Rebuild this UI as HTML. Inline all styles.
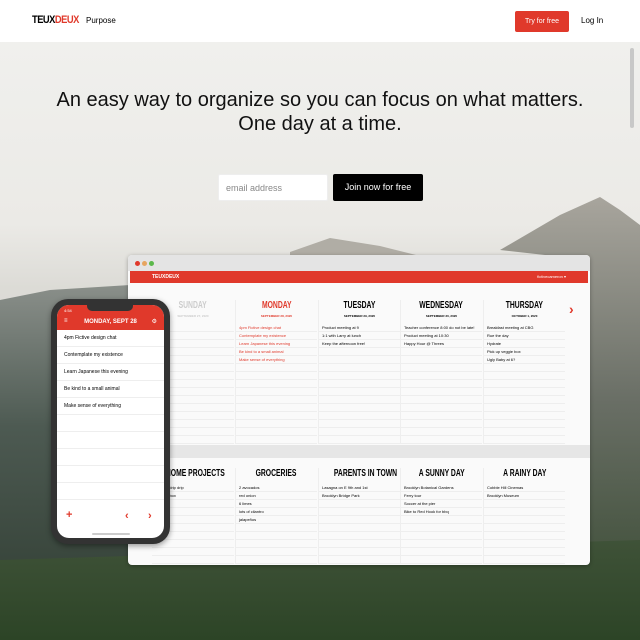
<!DOCTYPE html>
<html><head><meta charset="utf-8"><style>
*{margin:0;padding:0;box-sizing:border-box}
body{width:640px;height:640px;overflow:hidden;font-family:"Liberation Sans",sans-serif;position:relative;background:#eeefed}
.nav{position:absolute;left:0;top:0;width:640px;height:42px;background:#fff;z-index:5}
.abs{position:absolute}
.col{position:absolute;top:300px;width:82px}
.col h4{text-align:center;font-size:10px;font-weight:bold;white-space:nowrap;height:12px}
.col h4 span{display:inline-block;transform:scaleX(.68);transform-origin:center}
.col .d{text-align:center;font-size:3px;font-weight:bold;margin-top:2px;height:10px;white-space:nowrap}
.rows div{height:8px;border-bottom:1px solid #eee;font-size:4px;line-height:7px;padding-left:3px;white-space:nowrap;overflow:hidden}
.ph div{height:17px;border-bottom:1px solid #eee;font-size:5px;line-height:17px;padding-left:7px}
</style></head><body>
<svg class="abs" style="left:0;top:0" width="640" height="640">
<defs>
<linearGradient id="sky" x1="0" y1="0" x2="0" y2="1"><stop offset="0" stop-color="#f1f1ef"/><stop offset=".35" stop-color="#ebeae6"/><stop offset=".45" stop-color="#dcdbd6"/><stop offset="1" stop-color="#c9c8c3"/></linearGradient>
<linearGradient id="g1" x1="0" y1="0" x2="0" y2="1"><stop offset="0" stop-color="#8a8f8a"/><stop offset=".4" stop-color="#4d5a52"/><stop offset="1" stop-color="#2e3b30"/></linearGradient>
<linearGradient id="g2" x1="0" y1="0" x2="0" y2="1"><stop offset="0" stop-color="#3f5238"/><stop offset="1" stop-color="#2c4426"/></linearGradient>
<linearGradient id="g3" x1="0" y1="0" x2="0" y2="1"><stop offset="0" stop-color="#a8a59d"/><stop offset=".5" stop-color="#6a6f66"/><stop offset="1" stop-color="#3c4d36"/></linearGradient>
</defs>
<rect width="640" height="640" fill="url(#sky)"/>
<polygon points="500,250 560,215 600,197 620,210 640,225 640,600 590,600 590,260" fill="url(#g3)"/>
<polygon points="290,252 330,238 380,246 420,256 290,256" fill="#b0ada5"/>
<polygon points="0,300 50,290 130,285 130,640 0,640" fill="url(#g1)"/>
<polygon points="0,560 640,540 640,640 0,640" fill="url(#g2)"/>
</svg>
<div class="nav">
<div class="abs" style="left:32px;top:14px;font-size:11px;font-weight:bold;letter-spacing:-0.6px;transform:scaleX(.85);transform-origin:left">TEUX<span style="color:#e0392b">DEUX</span></div>
<div class="abs" style="left:86px;top:16px;font-size:8px">Purpose</div>
<div class="abs" style="left:515px;top:11px;width:54px;height:21px;background:#e0392b;border-radius:2px;color:#fff;font-size:7px;text-align:center;line-height:21px">Try for free</div>
<div class="abs" style="left:581px;top:16px;font-size:8px">Log In</div>
</div>
<div class="abs" style="left:630px;top:48px;width:4px;height:80px;background:#c8c8c8;border-radius:2px"></div>
<div class="abs" style="left:0;top:88px;width:640px;text-align:center;font-size:20px;line-height:24px;color:#111">An easy way to organize so you can focus on what matters.<br>One day at a time.</div>
<div class="abs" style="left:218px;top:174px;width:110px;height:27px;background:#fff;border:1px solid #eee;border-radius:2px;font-size:9px;color:#888;padding:8px 7px">email address</div>
<div class="abs" style="left:333px;top:174px;width:90px;height:27px;background:#000;border-radius:2px;color:#fff;font-size:9px;text-align:center;line-height:27px">Join now for free</div>

<div class="abs" style="left:128px;top:255px;width:462px;height:310px;background:#fafafa;border-radius:4px;box-shadow:0 1px 4px rgba(0,0,0,.3);overflow:hidden">
<div style="height:16px;background:#e4e4e4;position:relative">
<span class="abs" style="left:7px;top:6px;width:5px;height:5px;border-radius:50%;background:#e0392b"></span>
<span class="abs" style="left:14px;top:6px;width:5px;height:5px;border-radius:50%;background:#e6a560"></span>
<span class="abs" style="left:21px;top:6px;width:5px;height:5px;border-radius:50%;background:#5bb84b"></span></div>
<div style="height:12px;background:#e0392b;position:relative;margin:0 2px"><span class="abs" style="left:22px;top:3px;font-size:5px;color:#fff;font-weight:bold">TEUXDEUX</span><span class="abs" style="right:22px;top:3px;font-size:4px;color:#fff">fictivecameron ▾</span></div>
<div class="abs" style="left:0;top:190px;width:462px;height:13px;background:#e6e6e6"></div>
<div class="abs" style="left:441px;top:46px;color:#e0392b;font-size:14px;font-weight:bold">›</div>
</div>
<div class="col" style="left:152px;color:#ccc"><h4><span>SUNDAY</span></h4><div class="d">SEPTEMBER 27, 2020</div><div class="rows"><div></div><div></div><div></div><div></div><div></div><div></div><div></div><div></div><div></div><div></div><div></div><div></div><div></div><div></div><div></div></div></div>
<div class="col" style="left:235px;color:#e0392b;border-left:1px solid #eee"><h4><span>MONDAY</span></h4><div class="d">SEPTEMBER 28, 2020</div><div class="rows"><div>4pm Fictive design chat</div><div>Contemplate my existence</div><div>Learn Japanese this evening</div><div>Be kind to a small animal</div><div>Make sense of everything</div><div></div><div></div><div></div><div></div><div></div><div></div><div></div><div></div><div></div><div></div></div></div>
<div class="col" style="left:318px;border-left:1px solid #eee"><h4><span>TUESDAY</span></h4><div class="d">SEPTEMBER 29, 2020</div><div class="rows"><div>Product meeting at 9</div><div>1:1 with Larry at lunch</div><div>Keep the afternoon free!</div><div></div><div></div><div></div><div></div><div></div><div></div><div></div><div></div><div></div><div></div><div></div><div></div></div></div>
<div class="col" style="left:400px;border-left:1px solid #eee"><h4><span>WEDNESDAY</span></h4><div class="d">SEPTEMBER 30, 2020</div><div class="rows"><div>Teacher conference 8:00 do not be late!</div><div>Product meeting at 10:30</div><div>Happy Hour @ Threes</div><div></div><div></div><div></div><div></div><div></div><div></div><div></div><div></div><div></div><div></div><div></div><div></div></div></div>
<div class="col" style="left:483px;border-left:1px solid #eee"><h4><span>THURSDAY</span></h4><div class="d">OCTOBER 1, 2020</div><div class="rows"><div>Breakfast meeting at CBG</div><div>Rue the day</div><div>Hydrate</div><div>Pick up veggie box</div><div>Ugly Baby at 6?</div><div></div><div></div><div></div><div></div><div></div><div></div><div></div><div></div><div></div><div></div></div></div>

<div class="col" style="left:152px;top:468px"><h4><span>HOME PROJECTS</span></h4><div class="rows" style="margin-top:4px"><div>Fix drip drip drip</div><div>Garden box</div><div></div><div></div><div></div><div></div><div></div><div></div><div></div><div></div></div></div>
<div class="col" style="left:235px;top:468px;border-left:1px solid #eee"><h4><span>GROCERIES</span></h4><div class="rows" style="margin-top:4px"><div>2 avocados</div><div>red onion</div><div>6 limes</div><div>lots of cilantro</div><div>jalapeños</div><div></div><div></div><div></div><div></div><div></div></div></div>
<div class="col" style="left:318px;top:468px;border-left:1px solid #eee"><h4><span>PARENTS IN TOWN</span></h4><div class="rows" style="margin-top:4px"><div>Lasagna on E 9th and 1st</div><div>Brooklyn Bridge Park</div><div></div><div></div><div></div><div></div><div></div><div></div><div></div><div></div></div></div>
<div class="col" style="left:400px;top:468px;border-left:1px solid #eee"><h4><span>A SUNNY DAY</span></h4><div class="rows" style="margin-top:4px"><div>Brooklyn Botanical Gardens</div><div>Ferry tour</div><div>Soccer at the pier</div><div>Bike to Red Hook for bbq</div><div></div><div></div><div></div><div></div><div></div><div></div></div></div>
<div class="col" style="left:483px;top:468px;border-left:1px solid #eee"><h4><span>A RAINY DAY</span></h4><div class="rows" style="margin-top:4px"><div>Cobble Hill Cinemas</div><div>Brooklyn Museum</div><div></div><div></div><div></div><div></div><div></div><div></div><div></div><div></div></div></div>

<div class="abs" style="left:51px;top:299px;width:119px;height:245px;background:#333;border-radius:17px;padding:6px;box-shadow:0 2px 6px rgba(0,0,0,.4)">
<div style="width:107px;height:233px;background:#fff;border-radius:12px;overflow:hidden;position:relative">
<div style="height:25px;background:#e0392b;color:#fff;position:relative">
<span class="abs" style="left:7px;top:3px;font-size:4px">4:54</span>
<div class="abs" style="left:30px;top:0;width:46px;height:6px;background:#333;border-radius:0 0 5px 5px"></div>
<span class="abs" style="left:7px;top:13px;font-size:6px">≡</span>
<span class="abs" style="left:0;width:107px;text-align:center;top:14px;font-size:6px;font-weight:bold">MONDAY, SEPT 28</span>
<span class="abs" style="right:7px;top:13px;font-size:6px">⚙</span></div>
<div class="ph"><div>4pm Fictive design chat</div><div>Contemplate my existence</div><div>Learn Japanese this evening</div><div>Be kind to a small animal</div><div>Make sense of everything</div><div></div><div></div><div></div><div></div><div></div></div>
<div class="abs" style="left:9px;top:204px;color:#e0392b;font-size:11px;font-weight:bold">+</div>
<div class="abs" style="left:68px;top:205px;color:#e0392b;font-size:11px;font-weight:bold">‹</div>
<div class="abs" style="left:91px;top:205px;color:#e0392b;font-size:11px;font-weight:bold">›</div>
<div class="abs" style="left:35px;top:228px;width:38px;height:2px;background:#ccc;border-radius:1px"></div>
</div></div>
</body></html>
